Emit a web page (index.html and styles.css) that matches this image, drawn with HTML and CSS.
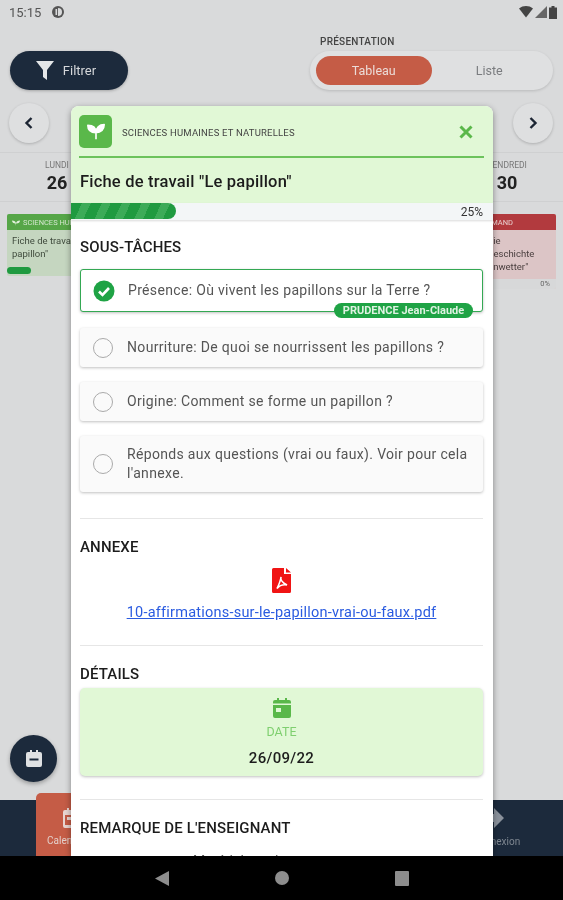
FILE: index.html
```html
<!DOCTYPE html>
<html lang="fr">
<head>
    <meta charset="UTF-8">
    <meta name="viewport" content="width=device-width, initial-scale=1.0">
    <title>Fiche de travail</title>
    <link rel="stylesheet" href="styles.css">
</head>
<body>

    <div class="screen">
        <div class="statusbar">
            <div class="status-left">
                <span>15:15</span>
                <svg class="status-dot" viewBox="0 0 14 14"><circle cx="7" cy="7" r="6" fill="#555"/><path d="M7 3a4 4 0 0 1 0 8z" fill="#d9dadb"/><rect x="4.500" y="4" width="1.600" height="6" fill="#d9dadb"/></svg>
            </div>
            <div class="status-right">
                <svg width="14" height="12" viewBox="0 0 14 12"><path d="M0 2.500C4-.8 10-.8 14 2.500L7 11.500z" fill="#444"/></svg>
                <svg width="12" height="12" viewBox="0 0 12 12"><path d="M12 0v12H0z" fill="#666"/></svg>
                <svg width="8" height="13" viewBox="0 0 8 13"><path d="M2.500 0h3v1.500H8V13H0V1.500h2.500z" fill="#444"/></svg>
            </div>
        </div>

        <div class="toolbar">
            <button class="filter-btn">
                <svg width="20" height="21" viewBox="0 0 20 21"><path d="M1 1h18l-7 9v10l-4-3v-7z" fill="#e4e6e8"/></svg>
                Filtrer
            </button>
            <div class="presentation">
                <div class="presentation-label">PRÉSENTATION</div>
                <div class="toggle">
                    <span class="toggle-on">Tableau</span>
                    <span class="toggle-off">Liste</span>
                </div>
            </div>
        </div>

        <div class="week-nav">
            <div class="round-btn"><svg width="10" height="14" viewBox="0 0 10 14"><path d="M7.500 2 2.500 7l5 5" fill="none" stroke="#1c2533" stroke-width="2.400"/></svg></div>
            <div class="round-btn"><svg width="10" height="14" viewBox="0 0 10 14"><path d="M2.500 2l5 5-5 5" fill="none" stroke="#1c2533" stroke-width="2.400"/></svg></div>
        </div>

        <div class="days">
            <div class="day"><div class="day-name">LUNDI</div><div class="day-num">26</div></div>
            <div class="day day-end"><div class="day-name">VENDREDI</div><div class="day-num">30</div></div>
        </div>

        <div class="board">
            <div class="mini-card mini-green">
                <div class="mini-head">
                    <svg width="8" height="7" viewBox="0 0 16 14"><path d="M8 14V9C8 5 4 3 0 3c0 4 3 6 7 6M8 9c0-4 4-6 8-6 0 4-3 6-7 6" fill="#e1f0dc"/></svg>
                    SCIENCES HUMAINES
                </div>
                <div class="mini-body">Fiche de travail "Le<br>papillon"</div>
                <div class="mini-progress"></div>
            </div>
            <div class="mini-card mini-red">
                <div class="mini-head mini-head-right">ALLEMAND</div>
                <div class="mini-body mini-body-right">Die<br>Geschichte<br>Unwetter"</div>
                <div class="mini-foot">0%</div>
            </div>
        </div>

        <div class="fab">
            <svg width="18" height="19" viewBox="0 0 18 19"><path d="M3 3h2V1h2v2h4V1h2v2h2a2 2 0 0 1 2 2v11a2 2 0 0 1-2 2H3a2 2 0 0 1-2-2V5a2 2 0 0 1 2-2z" fill="#dfe1e3"/><rect x="4.500" y="9.500" width="9" height="2" fill="#1c2a3c"/></svg>
        </div>

        <div class="bottom-nav">
            <div class="nav-tab">
                <svg width="20" height="22" viewBox="0 0 20 22"><path d="M3 3h2V1h2v2h6V1h2v2h2a2 2 0 0 1 2 2v14a2 2 0 0 1-2 2H3a2 2 0 0 1-2-2V5a2 2 0 0 1 2-2z" fill="#e8d5d0"/><rect x="3" y="8" width="14" height="10" fill="#c55c46"/><rect x="5" y="10" width="5" height="3" fill="#e8d5d0"/></svg>
                <span>Calendrier</span>
            </div>
            <div class="nav-item">
                <svg width="20" height="20" viewBox="0 0 20 20"><path d="M0 6h9V0l10 10-10 10v-6H0z" fill="#8a919b"/></svg>
                <span>Connexion</span>
            </div>
        </div>

        <div class="android-bar">
            <svg width="14" height="15" viewBox="0 0 14 15"><path d="M14 0v15L0 7.500z" fill="#8d8d8d"/></svg>
            <svg width="14" height="14" viewBox="0 0 14 14"><circle cx="7" cy="7" r="7" fill="#8d8d8d"/></svg>
            <svg width="14" height="15" viewBox="0 0 14 15"><rect width="14" height="15" rx="1" fill="#8d8d8d"/></svg>
        </div>

        <div class="modal">
            <div class="modal-head">
                <div class="subject-row">
                    <div class="subject-icon">
                        <svg width="18" height="18" viewBox="0 0 22 22"><path d="M11 21v-8C11 7 7 4 1 4c0 6 4 9 10 9M11 13c0-6 4-10 10-10 0 6-4 10-10 10" fill="#fff" stroke="#fff" stroke-width="2" stroke-linejoin="round"/></svg>
                    </div>
                    <div class="subject-name">SCIENCES HUMAINES ET NATURELLES</div>
                    <svg class="close-icon" width="14" height="14" viewBox="0 0 14 14"><path d="M1.500 1.500l11 11M12.500 1.500l-11 11" stroke="#5ab84a" stroke-width="3" fill="none"/></svg>
                </div>
                <h2 class="modal-title">Fiche de travail "Le papillon"</h2>
            </div>

            <div class="progress">
                <div class="progress-fill"></div>
                <span class="progress-label">25%</span>
            </div>

            <div class="modal-body">
                <h3 class="section-title">SOUS-TÂCHES</h3>
                <div class="task task-done">
                    <svg class="task-check" width="22" height="22" viewBox="0 0 22 22"><circle cx="11" cy="11" r="10.500" fill="#1fa345"/><path d="M6 11.500l3.500 3.500L16 8" fill="none" stroke="#fff" stroke-width="2.600"/></svg>
                    <span>Présence: Où vivent les papillons sur la Terre ?</span>
                    <div class="task-badge">PRUDENCE Jean-Claude</div>
                </div>
                <div class="task"><div class="task-radio"></div><span>Nourriture: De quoi se nourrissent les papillons ?</span></div>
                <div class="task"><div class="task-radio"></div><span>Origine: Comment se forme un papillon ?</span></div>
                <div class="task"><div class="task-radio"></div><span>Réponds aux questions (vrai ou faux). Voir pour cela l'annexe.</span></div>

                <hr class="rule rule-tasks">

                <h3 class="section-title">ANNEXE</h3>
                <div class="attachment">
                    <svg width="19" height="25" viewBox="0 0 19 25"><path d="M1.500 0H12v6h7v17.500a1.500 1.500 0 0 1-1.500 1.500h-16A1.500 1.500 0 0 1 0 23.500v-22A1.500 1.500 0 0 1 1.500 0zM14 0l5 4.500h-5z" fill="#f01414"/><path d="M9 9c-1 3 2 6 6 8-3-.5-7 0-10 3.500 1.500-3 3.500-7 4-11.500z" fill="none" stroke="#fff" stroke-width="1.600"/></svg>
                    <a class="attachment-link" href="#">10-affirmations-sur-le-papillon-vrai-ou-faux.pdf</a>
                </div>

                <hr class="rule rule-annex">

                <h3 class="section-title">DÉTAILS</h3>
                <div class="detail-card">
                    <svg width="18" height="20" viewBox="0 0 18 20"><path d="M2 2h2V0h2v2h6V0h2v2h2a2 2 0 0 1 2 2v14a2 2 0 0 1-2 2H2a2 2 0 0 1-2-2V4a2 2 0 0 1 2-2z" fill="#5ab84a"/><rect x="0" y="5.500" width="18" height="1.500" fill="#e1f8d6"/><rect x="3" y="10" width="5" height="4" fill="#e1f8d6"/></svg>
                    <div class="detail-label">DATE</div>
                    <div class="detail-value">26/09/22</div>
                </div>

                <hr class="rule rule-details">

                <h3 class="section-title">REMARQUE DE L'ENSEIGNANT</h3>
                <div class="remark">Matériel requis</div>
            </div>
        </div>
    </div>

</body>
</html>
```

FILE: styles.css
```css
* {
    box-sizing: border-box;
}
body {
    margin: 0;
    font-family: Roboto, "Liberation Sans", sans-serif;
    background-color: #d9dadb;
}
.screen {
    position: relative;
    width: 563px;
    height: 900px;
    overflow: hidden;
    display: flex;
    flex-direction: column;
    background-color: #d9dadb;
    filter: blur(0.5px);
}

/* status bar */
.statusbar {
    height: 24px;
    padding: 0 6px 0 9px;
    display: flex;
    justify-content: space-between;
    align-items: center;
    color: #555;
    font-size: 13px;
}
.status-left {
    display: flex;
    align-items: center;
    gap: 10px;
}
.status-dot {
    width: 14px;
    height: 14px;
}
.status-right {
    display: flex;
    align-items: center;
    gap: 2px;
}

/* top controls */
.toolbar {
    height: 68px;
    padding: 11px 10px 0;
    display: flex;
    justify-content: space-between;
}
.filter-btn {
    width: 118px;
    height: 39px;
    margin-top: 16px;
    padding: 0;
    border: none;
    border-radius: 20px;
    background-color: #1c2a3c;
    color: #d5d7da;
    font-family: inherit;
    font-size: 13px;
    display: flex;
    align-items: center;
    justify-content: center;
    gap: 8px;
    box-shadow: 0 1px 3px rgba(0,0,0,0.25);
}
.filter-btn svg {
    margin-left: -7px;
}
.presentation-label {
    font-size: 10px;
    letter-spacing: 0.25px;
    font-weight: 500;
    color: #444;
    margin: 1px 0 4px 10px;
}
.toggle {
    width: 243px;
    height: 39px;
    padding: 5px 6px;
    border-radius: 20px;
    background-color: #dfe0e1;
    display: flex;
    align-items: center;
    font-size: 12.500px;
    box-shadow: 0 1px 3px rgba(0,0,0,0.15);
}
.toggle-on, .toggle-off {
    width: 117px;
    text-align: center;
}
.toggle-on {
    height: 29px;
    line-height: 29px;
    border-radius: 15px;
    background-color: #c55c46;
    color: #ecdcd8;
}
.toggle-off {
    color: #7a7c7f;
}

.week-nav {
    height: 60px;
    padding: 11px 10px 0 9px;
    display: flex;
    justify-content: space-between;
}
.round-btn {
    width: 40px;
    height: 40px;
    border-radius: 50%;
    background-color: #dedfe0;
    display: flex;
    align-items: center;
    justify-content: center;
    box-shadow: 0 1px 3px rgba(0,0,0,0.2);
}

.days {
    height: 50px;
    border-top: 1px solid #cfd0d1;
    border-bottom: 1px solid #cfd0d1;
    display: flex;
    justify-content: space-between;
    text-align: center;
}
.day {
    width: 114px;
    padding-top: 7px;
}
.day-end {
    width: 112px;
}
.day-name {
    font-size: 8.500px;
    color: #777;
}
.day-num {
    font-size: 18px;
    font-weight: 700;
    color: #222;
    margin-top: 2px;
}

/* cards behind the modal */
.board {
    flex: 1;
    padding: 12px 7px 0;
    display: flex;
    justify-content: space-between;
    align-items: flex-start;
}
.mini-card {
    width: 150px;
    border-radius: 2px;
    overflow: hidden;
    font-size: 9.500px;
    line-height: 13px;
    color: #3f4a3c;
}
.mini-green {
    height: 62px;
    background-color: #c5d6c0;
}
.mini-red {
    height: 75px;
    background-color: #dcc5c6;
}
.mini-head {
    height: 16px;
    padding-left: 5px;
    display: flex;
    align-items: center;
    gap: 3px;
    font-size: 7.500px;
    color: #d3e6ce;
    background-color: #56a648;
}
.mini-red .mini-head {
    background-color: #b23a3e;
    color: #e8d0d0;
}
.mini-head-right {
    justify-content: flex-end;
    padding-right: 43px;
}
.mini-body {
    padding: 4px 5px 7px;
}
.mini-body-right {
    padding: 4px 0 6px 81px;
    color: #4a3f3f;
}
.mini-progress {
    width: 24px;
    height: 7px;
    border-radius: 4px;
    background-color: #1f9a40;
}
.mini-foot {
    height: 10px;
    line-height: 10px;
    font-size: 7.500px;
    text-align: right;
    padding-right: 6px;
    color: #666;
    background-color: #d7d8d9;
}

.fab {
    position: absolute;
    left: 10px;
    top: 735px;
    width: 47px;
    height: 47px;
    border-radius: 50%;
    background-color: #1c2a3c;
    display: flex;
    align-items: center;
    justify-content: center;
    box-shadow: 0 2px 4px rgba(0,0,0,0.3);
}

.bottom-nav {
    height: 56px;
    background-color: #1c2a3c;
    display: flex;
    justify-content: space-between;
    padding: 0 26px 0 36px;
    font-size: 10px;
    position: relative;
}
.nav-tab {
    position: absolute;
    left: 36px;
    top: -7px;
    width: 110px;
    height: 63px;
    padding-top: 14px;
    border-radius: 5px 5px 0 0;
    background-color: #c55c46;
    color: #e3cfca;
    display: flex;
    flex-direction: column;
    align-items: flex-start;
    gap: 6px;
}
.nav-tab svg {
    margin-left: 26px;
}
.nav-tab span {
    margin-left: 11px;
}
.nav-item {
    margin-left: auto;
    padding-top: 8px;
    width: 64px;
    color: #7f8791;
    display: flex;
    flex-direction: column;
    align-items: flex-start;
    gap: 8px;
}
.nav-item svg {
    margin-left: 12px;
}
.android-bar {
    height: 44px;
    background-color: #000;
    display: flex;
    align-items: center;
    justify-content: center;
    gap: 106px;
}

/* modal */
.modal {
    position: absolute;
    left: 71px;
    top: 106px;
    width: 422px;
    height: 750px;
    overflow: hidden;
    border-radius: 8px 8px 0 0;
    background-color: #fff;
    box-shadow: 0 2px 6px rgba(0,0,0,0.4);
    color: #1c1c1c;
}
.modal-head {
    height: 97px;
    padding: 9px 9px 0 8px;
    background-color: #e1f8d6;
}
.subject-row {
    height: 43px;
    padding-bottom: 9px;
    border-bottom: 2px solid #6cc35c;
    display: flex;
    align-items: center;
}
.subject-icon {
    width: 33px;
    height: 33px;
    border-radius: 5px;
    background-color: #5ab84a;
    display: flex;
    align-items: center;
    justify-content: center;
}
.subject-name {
    flex: 1;
    margin-left: 10px;
    padding-top: 2px;
    font-size: 9.500px;
    letter-spacing: 0.2px;
    color: #444;
}
.close-icon {
    margin: 2px 11px 0 0;
}
.modal-title {
    margin: 14px 0 0 1px;
    font-size: 16.500px;
    letter-spacing: 0.2px;
    line-height: 20px;
    font-weight: 500;
}
.progress {
    position: relative;
    height: 17px;
    background-color: #f3f6f7;
    box-shadow: 0 1px 2px rgba(0,0,0,0.15);
}
.progress-fill {
    width: 105px;
    height: 16px;
    border-radius: 0 8px 8px 0;
    background: repeating-linear-gradient(115deg, #1f9a40 0 10px, #3cab58 10px 18px);
}
.progress-label {
    position: absolute;
    right: 10px;
    top: 2px;
    font-size: 12px;
    line-height: 14px;
    color: #333;
}
.modal-body {
    padding: 0 10px 0 9px;
}
.section-title {
    margin: 0;
    font-size: 15px;
    letter-spacing: 0.15px;
    line-height: 20px;
    font-weight: 500;
}
.modal-body > .section-title:first-child {
    margin-top: 17px;
}
.task {
    position: relative;
    min-height: 39px;
    margin-top: 15px;
    padding: 9px 12px 9px 13px;
    border-radius: 3px;
    background-color: #fafafa;
    box-shadow: 0 1px 3px rgba(0,0,0,0.25);
    display: flex;
    align-items: center;
    gap: 14px;
    font-size: 14px;
    letter-spacing: 0.33px;
    line-height: 19px;
    color: #555;
}
.section-title + .task {
    margin-top: 12px;
}
.task-done {
    min-height: 43px;
    margin-bottom: 16px;
    padding-left: 12px;
    gap: 13px;
    background-color: #fff;
    border: 1px solid #34a853;
}
.task-check {
    flex: none;
}
.task-radio {
    flex: none;
    width: 20px;
    height: 20px;
    border: 1.500px solid #aaa;
    border-radius: 50%;
}
.task-badge {
    position: absolute;
    right: 9px;
    bottom: -7px;
    width: 139px;
    height: 15px;
    border-radius: 8px;
    background-color: #1fa345;
    color: #dff2e2;
    font-size: 11px;
    letter-spacing: 0;
    font-weight: 700;
    line-height: 15px;
    text-align: center;
}
.rule {
    margin: 0;
    border: none;
    border-top: 1px solid #e6e6e6;
}
.rule-tasks {
    margin: 26px 0 18px;
}
.attachment {
    margin-top: 11px;
    display: flex;
    flex-direction: column;
    align-items: center;
    gap: 10px;
}
.attachment-link {
    font-size: 14.500px;
    letter-spacing: 0.23px;
    line-height: 20px;
    color: #2a5be0;
}
.rule-annex {
    margin: 22px 0 18px;
}
.detail-card {
    height: 88px;
    margin-top: 4px;
    padding-top: 10px;
    border-radius: 5px;
    background-color: #e1f8d6;
    box-shadow: 0 1px 3px rgba(0,0,0,0.25);
    display: flex;
    flex-direction: column;
    align-items: center;
}
.detail-label {
    margin-top: 6px;
    font-size: 12.500px;
    color: #7fcf6f;
}
.detail-value {
    margin-top: 10px;
    font-size: 15px;
    letter-spacing: 0.3px;
    font-weight: 500;
}
.rule-details {
    margin: 23px 0 18px;
}
.remark {
    margin-top: 15px;
    padding-left: 113px;
    font-size: 14px;
    color: #555;
}
```
